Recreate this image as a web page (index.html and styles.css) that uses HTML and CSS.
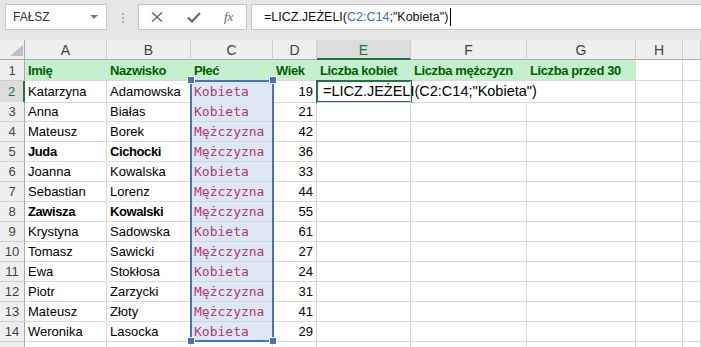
FILE: index.html
```html
<!DOCTYPE html>
<html lang="pl">
<head>
    <meta charset="UTF-8">
    <title>Arkusz - LICZ.JEŻELI</title>
    <link rel="stylesheet" href="styles.css">
</head>
<body>
    <div class="toolbar">
        <div class="name-box"><span>FAŁSZ</span><span class="drop"></span></div>
        <div class="grip"><i></i><i></i><i></i></div>
        <div class="fx-buttons">
            <svg class="ico-x" width="12" height="10" viewBox="0 0 12 10"><path d="M1 0.5L11 9.5M11 0.5L1 9.5" stroke="#6a6a6a" stroke-width="1.5" fill="none"/></svg>
            <svg class="ico-ok" width="14" height="11" viewBox="0 0 14 11"><path d="M1 5.5L5 9.5L13 1" stroke="#6a6a6a" stroke-width="2.2" fill="none"/></svg>
            <span class="ico-fx">fx</span>
        </div>
        <div class="formula">=LICZ.JEŻELI(<span class="ref">C2:C14</span>;"Kobieta")<span class="cursor"></span></div>
    </div>

    <div class="sheet">
        <div class="row hd-row">
            <div class="cell corner"><svg width="25" height="20" viewBox="0 0 25 20"><path d="M10 16L23 5L23 16Z" fill="#bfbfbf"/></svg></div>
            <div class="cell hd">A</div>
            <div class="cell hd">B</div>
            <div class="cell hd">C</div>
            <div class="cell hd">D</div>
            <div class="cell hd active-col">E</div>
            <div class="cell hd">F</div>
            <div class="cell hd">G</div>
            <div class="cell hd">H</div>
            <div class="cell hd"></div>
        </div>
        <div class="row r1">
            <div class="cell rh">1</div>
            <div class="cell g">Imię</div>
            <div class="cell g">Nazwisko</div>
            <div class="cell g">Płeć</div>
            <div class="cell g">Wiek</div>
            <div class="cell g">Liczba kobiet</div>
            <div class="cell g">Liczba mężczyzn</div>
            <div class="cell g">Liczba przed 30</div>
            <div class="cell"></div>
            <div class="cell"></div>
        </div>
        <div class="row r2">
            <div class="cell rh active-row">2</div>
            <div class="cell">Katarzyna</div>
            <div class="cell">Adamowska</div>
            <div class="cell sel">Kobieta</div>
            <div class="cell num">19</div>
            <div class="cell edit">=LICZ.JEŻELI(C2:C14;"Kobieta")</div>
            <div class="cell spill"></div>
            <div class="cell"></div>
            <div class="cell"></div>
            <div class="cell"></div>
        </div>
        <div class="row">
            <div class="cell rh">3</div>
            <div class="cell">Anna</div>
            <div class="cell">Białas</div>
            <div class="cell sel">Kobieta</div>
            <div class="cell num">21</div>
            <div class="cell"></div><div class="cell"></div><div class="cell"></div><div class="cell"></div><div class="cell"></div>
        </div>
        <div class="row">
            <div class="cell rh">4</div>
            <div class="cell">Mateusz</div>
            <div class="cell">Borek</div>
            <div class="cell sel">Mężczyzna</div>
            <div class="cell num">42</div>
            <div class="cell"></div><div class="cell"></div><div class="cell"></div><div class="cell"></div><div class="cell"></div>
        </div>
        <div class="row">
            <div class="cell rh">5</div>
            <div class="cell b">Juda</div>
            <div class="cell b">Cichocki</div>
            <div class="cell sel">Mężczyzna</div>
            <div class="cell num">36</div>
            <div class="cell"></div><div class="cell"></div><div class="cell"></div><div class="cell"></div><div class="cell"></div>
        </div>
        <div class="row">
            <div class="cell rh">6</div>
            <div class="cell">Joanna</div>
            <div class="cell">Kowalska</div>
            <div class="cell sel">Kobieta</div>
            <div class="cell num">33</div>
            <div class="cell"></div><div class="cell"></div><div class="cell"></div><div class="cell"></div><div class="cell"></div>
        </div>
        <div class="row">
            <div class="cell rh">7</div>
            <div class="cell">Sebastian</div>
            <div class="cell">Lorenz</div>
            <div class="cell sel">Mężczyzna</div>
            <div class="cell num">44</div>
            <div class="cell"></div><div class="cell"></div><div class="cell"></div><div class="cell"></div><div class="cell"></div>
        </div>
        <div class="row">
            <div class="cell rh">8</div>
            <div class="cell b">Zawisza</div>
            <div class="cell b">Kowalski</div>
            <div class="cell sel">Mężczyzna</div>
            <div class="cell num">55</div>
            <div class="cell"></div><div class="cell"></div><div class="cell"></div><div class="cell"></div><div class="cell"></div>
        </div>
        <div class="row">
            <div class="cell rh">9</div>
            <div class="cell">Krystyna</div>
            <div class="cell">Sadowska</div>
            <div class="cell sel">Kobieta</div>
            <div class="cell num">61</div>
            <div class="cell"></div><div class="cell"></div><div class="cell"></div><div class="cell"></div><div class="cell"></div>
        </div>
        <div class="row">
            <div class="cell rh">10</div>
            <div class="cell">Tomasz</div>
            <div class="cell">Sawicki</div>
            <div class="cell sel">Mężczyzna</div>
            <div class="cell num">27</div>
            <div class="cell"></div><div class="cell"></div><div class="cell"></div><div class="cell"></div><div class="cell"></div>
        </div>
        <div class="row">
            <div class="cell rh">11</div>
            <div class="cell">Ewa</div>
            <div class="cell">Stokłosa</div>
            <div class="cell sel">Kobieta</div>
            <div class="cell num">24</div>
            <div class="cell"></div><div class="cell"></div><div class="cell"></div><div class="cell"></div><div class="cell"></div>
        </div>
        <div class="row">
            <div class="cell rh">12</div>
            <div class="cell">Piotr</div>
            <div class="cell">Zarzycki</div>
            <div class="cell sel">Mężczyzna</div>
            <div class="cell num">31</div>
            <div class="cell"></div><div class="cell"></div><div class="cell"></div><div class="cell"></div><div class="cell"></div>
        </div>
        <div class="row">
            <div class="cell rh">13</div>
            <div class="cell">Mateusz</div>
            <div class="cell">Złoty</div>
            <div class="cell sel">Mężczyzna</div>
            <div class="cell num">41</div>
            <div class="cell"></div><div class="cell"></div><div class="cell"></div><div class="cell"></div><div class="cell"></div>
        </div>
        <div class="row">
            <div class="cell rh">14</div>
            <div class="cell">Weronika</div>
            <div class="cell">Lasocka</div>
            <div class="cell sel">Kobieta</div>
            <div class="cell num">29</div>
            <div class="cell"></div><div class="cell"></div><div class="cell"></div><div class="cell"></div><div class="cell"></div>
        </div>
        <div class="row">
            <div class="cell rh"></div>
            <div class="cell"></div><div class="cell"></div><div class="cell"></div><div class="cell"></div>
            <div class="cell"></div><div class="cell"></div><div class="cell"></div><div class="cell"></div><div class="cell"></div>
        </div>

        <!-- zakres z formuły (C2:C14) -->
        <div class="range">
            <span class="handle tl"></span><span class="handle tr"></span>
            <span class="handle bl"></span><span class="handle br"></span>
        </div>
        <!-- aktywna komórka E2 -->
        <div class="active-cell"></div>
    </div>
</body>
</html>
```

FILE: styles.css
```css
body {
    margin: 0;
    width: 701px;
    height: 347px;
    overflow: hidden;
    background-color: #fff;
    font-family: "Liberation Sans", Arial, sans-serif;
}
.toolbar {
    display: flex;
    align-items: flex-start;
    height: 40px;
    box-sizing: border-box;
    padding: 4px 0 0 5px;
    background-color: #e6e6e6;
}
.name-box {
    width: 102px;
    height: 26px;
    box-sizing: border-box;
    display: flex;
    align-items: center;
    justify-content: space-between;
    padding: 0 8px 0 7px;
    background-color: #fff;
    border: 1px solid #c6c6c6;
    font-size: 12px;
    color: #333;
}
.name-box .drop {
    width: 0;
    height: 0;
    border-left: 4px solid transparent;
    border-right: 4px solid transparent;
    border-top: 4px solid #7a7a7a;
}
.grip {
    display: flex;
    flex-direction: column;
    gap: 2px;
    margin: 9px 14px 0 15px;
}
.grip i {
    display: block;
    width: 2px;
    height: 2px;
    background-color: #b0b0b0;
}
.fx-buttons {
    position: relative;
    width: 109px;
    height: 26px;
    box-sizing: border-box;
    background-color: #fff;
    border: 1px solid #c6c6c6;
}
.fx-buttons svg,
.fx-buttons .ico-fx {
    position: absolute;
}
.ico-x { left: 12px; top: 7px; }
.ico-ok { left: 48px; top: 7px; }
.ico-fx {
    left: 85px;
    top: 4px;
    font-family: "Liberation Serif", serif;
    font-style: italic;
    font-size: 13px;
    color: #666;
}
.formula {
    flex: 1;
    height: 26px;
    box-sizing: border-box;
    display: flex;
    align-items: center;
    margin-left: 4px;
    padding-left: 12px;
    background-color: #fff;
    border: 1px solid #c6c6c6;
    border-right: none;
    font-size: 12.5px;
    color: #111;
    white-space: nowrap;
}
.formula .ref {
    color: #3c6cc0;
}
.formula .cursor {
    display: inline-block;
    width: 1px;
    height: 18px;
    margin-left: 2px;
    background-color: #000;
}

.sheet {
    position: relative;
}
.row {
    display: grid;
    grid-template-columns: 25px 82px 84px 82px 44px 94px 116px 109px 47px 1fr;
    height: 20px;
}
.r1, .r2 { height: 21px; }
.cell {
    box-sizing: border-box;
    padding: 0 3px;
    border-right: 1px solid #d9d9d9;
    border-bottom: 1px solid #d9d9d9;
    font-size: 13px;
    line-height: 20px;
    color: #000;
    white-space: nowrap;
    overflow: hidden;
}
.r1 .cell, .r2 .cell { line-height: 21px; }
.corner {
    padding: 0;
    background-color: #efefef;
    border-right-color: #ababab;
    border-bottom-color: #ababab;
}
.corner svg { display: block; }
.hd {
    text-align: center;
    background-color: #efefef;
    border-right-color: #cfcfcf;
    border-bottom-color: #ababab;
    font-size: 14px;
    color: #444;
}
.hd.active-col {
    background-color: #dcdcdc;
    border-bottom: 2px solid #217346;
    color: #217346;
}
.rh {
    padding: 0;
    text-align: center;
    background-color: #efefef;
    border-right-color: #ababab;
    border-bottom-color: #cfcfcf;
    color: #444;
}
.rh.active-row {
    background-color: #dcdcdc;
    border-right: 2px solid #217346;
    color: #217346;
}
.g {
    background-color: #c6efce;
    border-right-color: #c6efce;
    color: #006100;
    font-weight: bold;
    letter-spacing: -0.4px;
}
.b {
    font-weight: bold;
    letter-spacing: -0.4px;
}
.sel {
    background-color: #dee7f4;
    border-right-color: #cbd4e2;
    border-bottom-color: #cbd4e2;
    font-family: "DejaVu Sans Mono", "Liberation Mono", monospace;
    font-size: 13px;
    color: #b5386e;
}
.num {
    text-align: right;
}
.edit {
    position: relative;
    z-index: 3;
    overflow: visible;
    padding-left: 6px;
    font-size: 14.5px;
}
.spill {
    border-right-color: transparent;
}

.range {
    position: absolute;
    left: 190px;
    top: 40px;
    width: 84px;
    height: 262px;
    box-sizing: border-box;
    border: 2px solid #4472c4;
}
.handle {
    position: absolute;
    width: 6px;
    height: 6px;
    background-color: #4472c4;
    border: 1px solid #fff;
}
.handle.tl { left: -5px; top: -6px; }
.handle.tr { right: -5px; top: -6px; }
.handle.bl { left: -5px; bottom: -5px; }
.handle.br { right: -5px; bottom: -5px; }
.active-cell {
    position: absolute;
    z-index: 1;
    left: 316px;
    top: 40px;
    width: 96px;
    height: 23px;
    box-sizing: border-box;
    border: 2px solid #217346;
}
```
